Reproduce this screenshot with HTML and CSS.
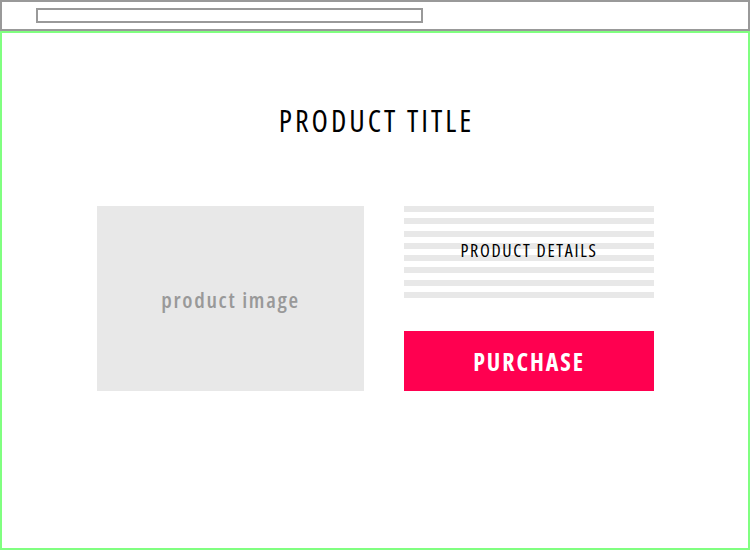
FILE: index.html
```html
<!DOCTYPE html>
<html>
<head>
<meta charset="utf-8">
<link rel="stylesheet" href="styles.css">
</head>
<body>
<div class="browser-bar">
  <div class="address"></div>
</div>
<div class="viewport">
  <h1 class="title">PRODUCT TITLE</h1>
  <div class="product">
    <div class="image">product image</div>
    <div class="side">
      <div class="details">
        <div class="lines">
          <span></span><span></span><span></span><span></span>
          <span></span><span></span><span></span><span></span>
        </div>
        <div class="details-label">PRODUCT DETAILS</div>
      </div>
      <button class="purchase">PURCHASE</button>
    </div>
  </div>
</div>
</body>
</html>
```
FILE: styles.css
```css
* { box-sizing: border-box; }
html, body { margin: 0; padding: 0; background: #fff; }
body {
  width: 750px;
  height: 550px;
  font-family: "Open Sans", "DejaVu Sans", sans-serif;
  font-stretch: 85%;
}
.browser-bar {
  height: 31px;
  border: 2px solid #999;
  padding: 6px 0 0 34px;
}
.address {
  width: 387px;
  height: 15px;
  border: 2px solid #999;
}
.viewport {
  height: 519px;
  border: 2px solid #80ff80;
  display: flex;
  flex-direction: column;
  align-items: center;
}
.title {
  margin: 70px 0 0;
  height: 36px;
  line-height: 36px;
  font-size: 30px;
  font-weight: 500;
  letter-spacing: 3px;
  text-indent: 3px;
  color: #000;
}
.product {
  margin-top: 67px;
  display: flex;
  gap: 40px;
  margin-left: 1px;
}
.image {
  width: 267px;
  height: 185px;
  background: #e8e8e8;
  color: #999;
  font-size: 22px;
  font-weight: 600;
  letter-spacing: 1.7px;
  display: flex;
  align-items: center;
  justify-content: center;
}
.side {
  width: 250px;
  display: flex;
  flex-direction: column;
  justify-content: space-between;
}
.details {
  position: relative;
  height: 92px;
}
.lines {
  height: 92px;
  display: flex;
  flex-direction: column;
  justify-content: space-between;
}
.lines span {
  display: block;
  height: 6px;
  background: #e8e8e8;
}
.details-label {
  position: absolute;
  left: 0; right: 0; top: 32px;
  text-align: center;
  font-size: 18px;
  line-height: 24px;
  font-weight: 500;
  letter-spacing: 1.7px;
  color: #000;
}
.purchase {
  height: 60px;
  border: 0;
  background: #ff0050;
  color: #fff;
  font-family: inherit;
  font-stretch: 85%;
  font-size: 24px;
  font-weight: 700;
  letter-spacing: 1.9px;
  padding: 0;
}
```
